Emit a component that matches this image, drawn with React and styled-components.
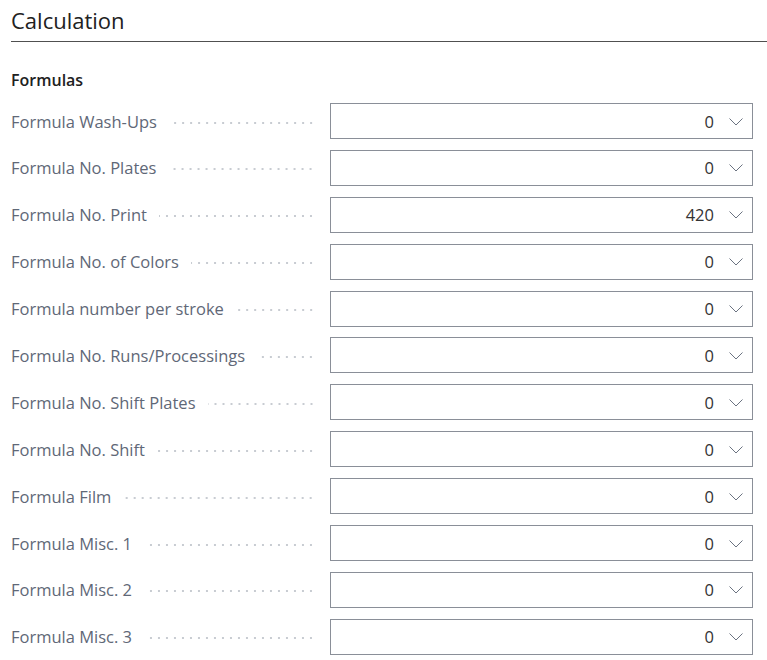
import React from "react";
import styled, { createGlobalStyle } from "styled-components";

const GlobalStyle = createGlobalStyle`
  body {
    margin: 0;
    background: #fff;
    font-family: "Open Sans", "Noto Sans", sans-serif;
  }
`;

const fields = [
  { label: "Formula Wash-Ups", value: "0" },
  { label: "Formula No. Plates", value: "0" },
  { label: "Formula No. Print", value: "420" },
  { label: "Formula No. of Colors", value: "0" },
  { label: "Formula number per stroke", value: "0" },
  { label: "Formula No. Runs/Processings", value: "0" },
  { label: "Formula No. Shift Plates", value: "0" },
  { label: "Formula No. Shift", value: "0" },
  { label: "Formula Film", value: "0" },
  { label: "Formula Misc. 1", value: "0" },
  { label: "Formula Misc. 2", value: "0" },
  { label: "Formula Misc. 3", value: "0" },
];

function Chevron() {
  return (
    <svg width="16" height="9" viewBox="0 0 16 9" fill="none">
      <path d="M1.5 1.5l6.5 6.5 6.5-6.5" stroke="#6b7381" strokeWidth="1" />
    </svg>
  );
}

function App() {
  return (
    <Page>
      <GlobalStyle />
      <Header>
        <Title>Calculation</Title>
      </Header>
      <Section>
        <Group>Formulas</Group>
        <Rows>
          {fields.map((f) => (
            <Row key={f.label}>
              <Label>
                <span>{f.label}</span>
                <Leader />
              </Label>
              <Select>
                <Value>{f.value}</Value>
                <Chevron />
              </Select>
            </Row>
          ))}
        </Rows>
      </Section>
    </Page>
  );
}

const Page = styled.div`
  padding: 0 0 0 11px;
`;

const Header = styled.div`
  border-bottom: 1px solid #505050;
  padding: 6px 0 6px;
`;

const Title = styled.h1`
  margin: 0;
  font-size: 22px;
  font-weight: 400;
  color: #212121;
  line-height: 29px;
`;

const Section = styled.div`
  padding-right: 14px;
`;

const Group = styled.div`
  margin-top: 28px;
  font-size: 16px;
  font-weight: 600;
  color: #212121;
  line-height: 20px;
`;

const Rows = styled.div`
  display: flex;
  flex-direction: column;
  gap: 10.9px;
  margin-top: 13px;
`;

const Row = styled.div`
  display: grid;
  grid-template-columns: 319px 1fr;
  align-items: center;
  height: 36px;
`;

const Label = styled.div`
  display: flex;
  align-items: center;
  padding-right: 15px;
  font-size: 16.5px;
  color: #5f6877;
  white-space: nowrap;

  & span {
    flex: none;
  }
`;

const Leader = styled.div`
  flex: 1;
  height: 4px;
  margin-left: 12px;
  margin-top: 3px;
  background-image: radial-gradient(circle, #c8ccd2 0.9px, transparent 1.2px);
  background-size: 8px 4px;
  background-repeat: repeat-x;
  background-position: right center;
`;

const Select = styled.div`
  box-sizing: border-box;
  height: 36px;
  border: 1px solid #8a8f98;
  display: flex;
  align-items: center;
  justify-content: flex-end;
  gap: 14px;
  padding: 0 8px 0 10px;
`;

const Value = styled.span`
  font-size: 16.5px;
  color: #333333;
`;

export default App;
